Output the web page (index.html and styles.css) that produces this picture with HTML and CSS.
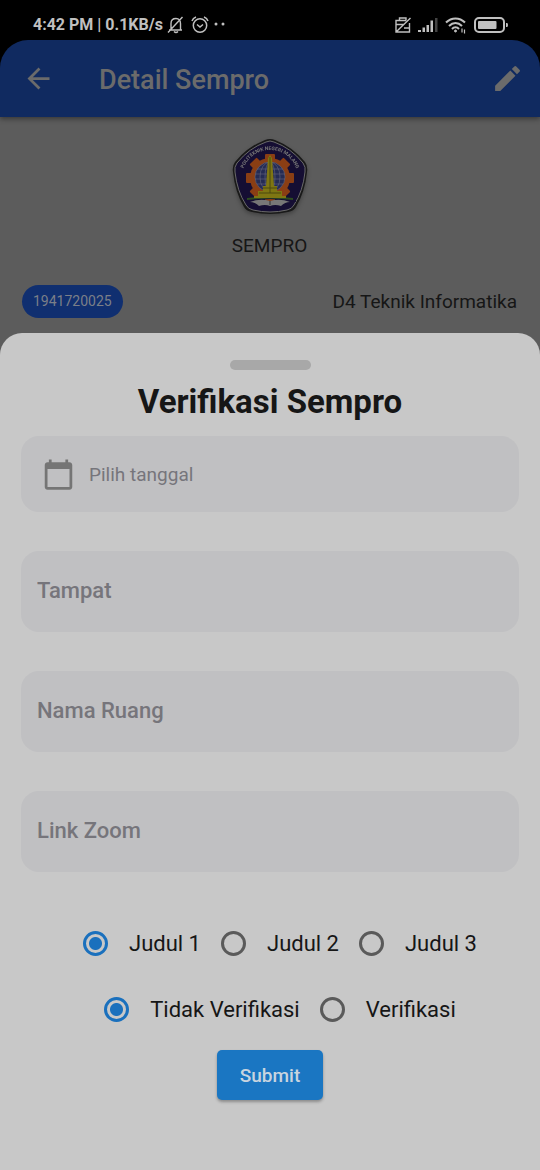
FILE: index.html
```html
<!DOCTYPE html>
<html lang="id">
<head>
<meta charset="utf-8">
<meta name="viewport" content="width=device-width, initial-scale=1">
<title>Detail Sempro</title>
<link rel="stylesheet" href="styles.css">
</head>
<body>
<div class="screen">
  <div class="top">
    <div class="status">
      <div class="status-left">
        <span>4:42 PM | 0.1KB/s</span>
        <svg width="18" height="18" viewBox="0 0 18 18" fill="none" stroke="currentColor" stroke-width="1.4"><path d="M2 14h13M4 14V7.500C4 4.500 6 2.500 9 2.500S13.500 4.500 13.500 7.500V14M7 15.500q2 2 4 0M1 16.500L15.500 1"/></svg>
        <svg class="alarm" width="20" height="18" viewBox="0 0 20 18" fill="none" stroke="currentColor" stroke-width="1.5"><circle cx="10" cy="9.500" r="6.700"/><path d="M7 8.500l3 2.500 3-2.500M2 5q1-3 4-4M18 5q-1-3-4-4"/></svg>
        <svg width="12" height="18" viewBox="0 0 12 18" fill="currentColor"><circle cx="2" cy="8" r="1.500"/><circle cx="9" cy="8" r="1.500"/></svg>
      </div>
      <div class="status-right">
        <svg width="16" height="18" viewBox="0 0 16 18" fill="none" stroke="currentColor" stroke-width="1.400"><path d="M11 4.500H1V16h13.500V7M4.500 4.500V2h6.500v2.500M1 8.500h8M9 12h5M1 16L15.500 2"/></svg>
        <svg width="20" height="18" viewBox="0 0 20 18" fill="currentColor"><path d="M0 14h3v2H0zM4.500 11.500h2.500V16H4.500zM8.500 9H11v7H8.500zM12.500 4.500H15V16h-2.500z"/><path d="M17 2h2.500v14H17z" opacity=".35"/></svg>
        <svg width="22" height="18" viewBox="0 0 22 18" fill="none" stroke="currentColor" stroke-width="2"><path d="M1 6.500C6.500 1 14.500 1 20 6.500M4 10c4-4 9-4 13 0M7 13c2-2.300 5-2.300 7 0"/><circle cx="10.500" cy="15" r="1" fill="currentColor" stroke-width="1"/><path d="M17 12.500v4M19.500 13.500v4" stroke-width="1.200"/></svg>
        <svg width="35" height="18" viewBox="0 0 35 18" fill="none"><rect x="1" y="2" width="29" height="14" rx="4" stroke="currentColor" stroke-width="2"/><rect x="4" y="5" width="18.500" height="8" rx="1" fill="currentColor"/><path d="M32 7v4h1q1 0 1-2t-1-2z" fill="currentColor"/></svg>
      </div>
    </div>
    <header class="appbar">
      <button class="icon-button" type="button" aria-label="Kembali"><svg width="33" height="33" viewBox="0 0 24 24" fill="currentColor"><path d="M20 11H7.830l5.590-5.590L12 4l-8 8 8 8 1.410-1.410L7.830 13H20z"/></svg></button>
      <h1 class="appbar-title">Detail Sempro</h1>
      <button class="icon-button" type="button" aria-label="Edit"><svg width="33" height="33" viewBox="0 0 24 24" fill="currentColor"><path d="M3 17.250V21h3.750L17.810 9.940l-3.750-3.750zM20.710 7.040a1 1 0 0 0 0-1.410l-2.340-2.340a1 1 0 0 0-1.410 0l-1.830 1.830 3.750 3.750z"/></svg></button>
    </header>
  </div>

  <main class="detail">
    <svg class="logo" width="76" height="76" viewBox="0 0 76 76" role="img" aria-label="Politeknik Negeri Malang">
      <path d="M33 1Q38-1 43 1Q61 8 73 23Q76 27 75 33Q73 53 64 68Q62 72 56 73Q38 77 20 73Q14 72 12 68Q3 53 1 33Q0 27 3 23Q15 8 33 1Z" fill="#191919"/>
      <path d="M34 3Q38 1 42 3Q59 9 71 24Q74 28 73 33Q71 52 62 66Q60 70 55 71Q38 75 21 71Q16 70 14 66Q5 52 3 33Q2 28 5 24Q17 9 34 3Z" fill="#150e33" stroke="#6a6a6a"/>
      <g fill="#8a3e14">
        <circle cx="38" cy="39" r="20"/>
        <rect x="33" y="15" width="10" height="48" rx="1"/>
        <rect x="33" y="15" width="10" height="48" rx="1" transform="rotate(45 38 39)"/>
        <rect x="33" y="15" width="10" height="48" rx="1" transform="rotate(90 38 39)"/>
        <rect x="33" y="15" width="10" height="48" rx="1" transform="rotate(135 38 39)"/>
      </g>
      <circle cx="38" cy="38" r="15" fill="#252c54"/>
      <g fill="none" stroke="#65677c" stroke-width=".6"><circle cx="38" cy="38" r="15"/><ellipse cx="38" cy="38" rx="10" ry="15"/><ellipse cx="38" cy="38" rx="5" ry="15"/><path d="M23 35h30M23 40h30M25 30h26M25 45h26"/></g>
      <path d="M12 57h52v6Q38 57 14 63z" fill="#150e33"/>
      <path d="M15 59q23-3 46 0v2q-23-3-46 0z" fill="#2d4c20"/>
      <path d="M36 19l2-3 2 3 2 28h3v5h5v5h4v2H22v-2h4v-5h5v-5h3z" fill="#7f7612"/>
      <path d="M38 18v36M27 54h22M31 49h14" stroke="#4c480f"/>
      <path d="M18 63q10-4 20-1 10-3 20 1-5 0-9 4-6-2-11 0-5-2-11 0-4-4-9-4z" fill="#777"/>
      <path d="M38 62v4" stroke="#333"/>
      <path id="crest-arc" d="M10 34A28 28 0 0 1 66 34" transform="translate(0 5)" fill="none"/>
      <text class="crest-text"><textPath href="#crest-arc" startOffset="50%" text-anchor="middle">POLITEKNIK NEGERI MALANG</textPath></text>
    </svg>
    <p class="kind">SEMPRO</p>
    <div class="student">
      <span class="chip">1941720025</span>
      <span>D4 Teknik Informatika</span>
    </div>
  </main>

  <form class="sheet">
    <div class="handle"></div>
    <h2 class="sheet-title">Verifikasi Sempro</h2>
    <div class="fields">
      <label class="field field-date">
        <svg width="33" height="33" viewBox="0 0 24 24" fill="currentColor"><path d="M20 3h-1V1h-2v2H7V1H5v2H4c-1.100 0-2 .9-2 2v16c0 1.100.9 2 2 2h16c1.100 0 2-.9 2-2V5c0-1.100-.9-2-2-2zm0 18H4V8h16z"/></svg>
        <input class="input" type="text" placeholder="Pilih tanggal" aria-label="Pilih tanggal" readonly>
      </label>
      <input class="field input" type="text" placeholder="Tampat" aria-label="Tampat">
      <input class="field input" type="text" placeholder="Nama Ruang" aria-label="Nama Ruang">
      <input class="field input" type="text" placeholder="Link Zoom" aria-label="Link Zoom">
    </div>
    <div class="choices" role="radiogroup" aria-label="Judul">
      <label class="choice"><input class="radio" type="radio" name="judul" checked>Judul 1</label>
      <label class="choice"><input class="radio" type="radio" name="judul">Judul 2</label>
      <label class="choice"><input class="radio" type="radio" name="judul">Judul 3</label>
    </div>
    <div class="choices" role="radiogroup" aria-label="Status">
      <label class="choice"><input class="radio" type="radio" name="status" checked>Tidak Verifikasi</label>
      <label class="choice"><input class="radio" type="radio" name="status">Verifikasi</label>
    </div>
    <button class="submit" type="submit">Submit</button>
  </form>
</div>
</body>
</html>
```
FILE: styles.css
```css
* { box-sizing: border-box; }
body { margin: 0; background: #5c5c5c; color: #161616; font-family: Roboto, "Liberation Sans", sans-serif; }
h1, h2, p { margin: 0; }
svg { display: block; flex: none; }
button, input { font: inherit; }

.screen { display: flex; flex-direction: column; min-height: 100vh; }

.top { background: #000; box-shadow: 0 2px 5px rgba(0, 0, 0, .4); }
.status { display: flex; justify-content: space-between; align-items: center; height: 40px; padding: 10px 31px 0 33px; color: #c0c0c0; font-size: 16px; font-weight: 700; line-height: 20px; }
.status-left { display: flex; align-items: center; gap: 4px; }
.alarm { margin-left: 1px; }
.status-right { display: flex; align-items: center; gap: 7px; }

.appbar { display: flex; align-items: center; height: 77px; padding: 0 16px 0 22px; border-radius: 28px 28px 0 0; background: #102a60; color: #6b6b6b; }
.appbar-title { flex: 1; padding: 2px 0 0 44px; font-size: 27px; font-weight: 500; line-height: 32px; }
.icon-button { padding: 0; border: 0; background: none; color: inherit; }

.detail { padding: 22px 23px 15px 22px; font-size: 19px; line-height: 22px; }
.logo { margin: 0 auto; filter: drop-shadow(0 2px 2px rgba(0, 0, 0, .3)); }
.crest-text { fill: #777; font-size: 5px; font-weight: 700; }
.kind { margin-top: 20px; text-align: center; }
.student { display: flex; justify-content: space-between; align-items: center; margin-top: 28px; }
.chip { padding: 0 11px; border-radius: 17px; background: #102f70; color: #7b7f88; font-size: 14px; line-height: 33px; }

.sheet { display: flex; flex: 1; flex-direction: column; align-items: center; padding: 27px 21px 70px; border-radius: 22px 22px 0 0; background: #c8c8c8; }
.handle { width: 81px; height: 10px; border-radius: 5px; background: #a8a8a8; }
.sheet-title { margin: 12px 0 14px; font-size: 33px; font-weight: 700; line-height: 40px; }

.fields { display: flex; flex-direction: column; gap: 39px; width: 100%; margin-bottom: 38px; }
.field { width: 100%; height: 81px; padding: 0 16px 3px; border: 0; border-radius: 18px; background: #c0c0c2; font-size: 22px; font-weight: 500; }
.field-date { display: flex; align-items: center; gap: 14px; height: 76px; padding: 0 21px; color: #757575; font-size: 19px; font-weight: 400; }
.input { min-width: 0; outline: 0; color: #161616; }
.field-date .input { flex: 1; padding: 0; border: 0; background: none; }
.input::placeholder { color: #76757b; opacity: 1; }

.choices { display: flex; flex-wrap: wrap; justify-content: center; }
.choice { display: flex; align-items: center; height: 66px; font-size: 22px; }
.radio { flex: none; width: 25px; height: 25px; margin: 0 21px 0 20px; border: 3px solid #5a5a5a; border-radius: 50%; appearance: none; }
.radio:checked { border-color: #1a70bd; background: radial-gradient(circle, #1a70bd 6px, transparent 7px); }

.submit { height: 50px; margin-top: 8px; padding: 0 23px; border: 0; border-radius: 5px; background: #1a76c2; color: #c8d4df; font-size: 19px; font-weight: 500; box-shadow: 0 2px 3px rgba(0, 0, 0, .3); }
```
